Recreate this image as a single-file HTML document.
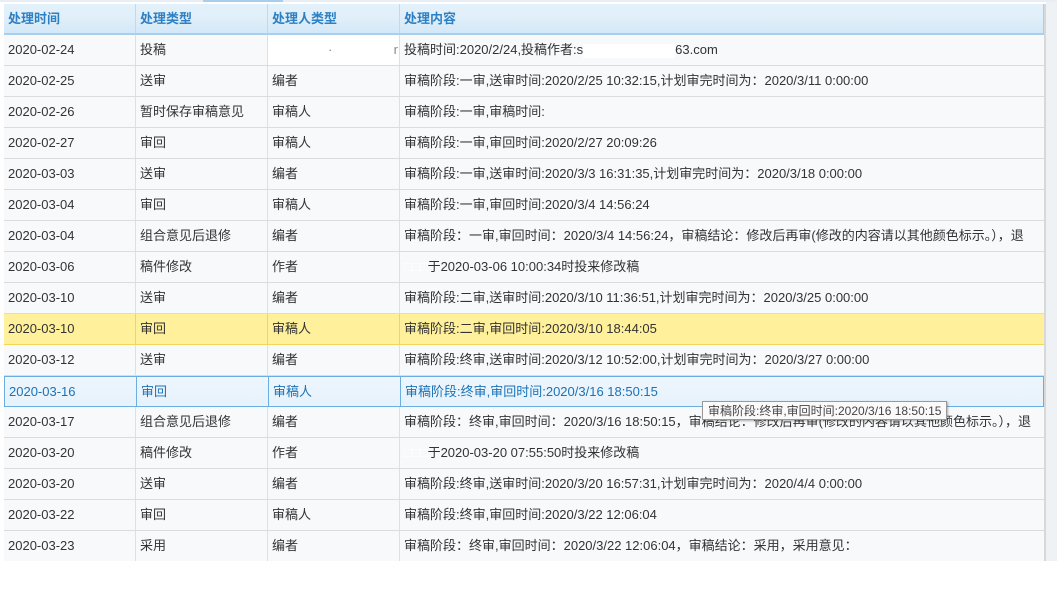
<!DOCTYPE html>
<html><head><meta charset="utf-8"><style>
*{margin:0;padding:0;box-sizing:border-box}
body{width:1057px;height:614px;background:#fff;position:relative;overflow:hidden;font-family:"Liberation Sans","Noto Sans CJK SC",sans-serif;font-size:13px;color:#333}
.topbar{position:absolute;left:0;top:0;width:1057px;height:2px;background:#e8eef3}
.topbar i{position:absolute;left:203px;width:80px;top:0;height:2px;background:#a9cdea}
.side{position:absolute;left:1044px;top:4px;width:2px;height:557px;background:#d8d8d8}
.panel{position:absolute;left:1046px;top:2px;width:11px;height:559px;background:#eef2f5}
.tbl{position:absolute;left:4px;top:4px;width:1040px}
.row{position:absolute;left:0;width:1040px;height:31px;background:#f8f9fb;border-bottom:1px solid #dcdcdc;white-space:nowrap;overflow:hidden}
.row span{position:absolute;top:0;height:30px;line-height:30px;padding-left:4px;border-right:1px solid #e0e0e0;overflow:hidden}
.c1{left:0;width:132px}.c2{left:132px;width:132px}.c3{left:264px;width:132px}.c4{left:396px;width:644px;border-right:none!important}
.hd{top:0;height:31px;background:linear-gradient(#e3f1fb,#e0eff9 50%,#d3e8f8);border-bottom:2px solid #a7d0ef;border-right:1px solid #a7d0ef;font-weight:bold;color:#2e80c4}
.hd span{border-right:1px solid #b9dbf3;height:29px;line-height:29px}
.y{background:#fff09b;border-bottom:1px solid #f2d65a}.y span{border-right:1px solid #f2d65a}
.s{background:linear-gradient(#eef6fd,#e6f2fc);border:1px solid #6aaee3;color:#1b72b6}.s span{border-right:1px solid #6aaee3;height:29px;line-height:29px}
.w{display:inline-block;background:#fff;height:14px;vertical-align:middle}
.tip{position:absolute;left:702px;top:401px;padding:0 5px;height:19px;line-height:18px;background:#fafafa;border:1px solid #999;box-shadow:1px 1px 2px rgba(0,0,0,.3);font-size:12px;color:#444;white-space:nowrap}
</style></head><body>
<div class="topbar"><i></i></div>
<div class="panel"></div>
<div class="side"></div>
<div class="tbl">
<div class="row hd"><span class="c1">处理时间</span><span class="c2">处理类型</span><span class="c3">处理人类型</span><span class="c4">处理内容</span></div>
<div class="row" style="top:31px"><span class="c1">2020-02-24</span><span class="c2">投稿</span><span class="c3" style="background:#fff;color:#888;text-align:right;padding-right:1px">·&nbsp;&nbsp;&nbsp;&nbsp;&nbsp;&nbsp;&nbsp;&nbsp;&nbsp;&nbsp;&nbsp;&nbsp;&nbsp;&nbsp;&nbsp;&nbsp;&nbsp;r</span><span class="c4">投稿时间:2020/2/24,投稿作者:s<span class="w" style="width:92px;position:static;height:14px;padding:0;border:0"></span>63.com</span></div>
<div class="row" style="top:62px"><span class="c1">2020-02-25</span><span class="c2">送审</span><span class="c3">编者</span><span class="c4">审稿阶段:一审,送审时间:2020/2/25 10:32:15,计划审完时间为：2020/3/11 0:00:00</span></div>
<div class="row" style="top:93px"><span class="c1">2020-02-26</span><span class="c2">暂时保存审稿意见</span><span class="c3">审稿人</span><span class="c4">审稿阶段:一审,审稿时间:</span></div>
<div class="row" style="top:124px"><span class="c1">2020-02-27</span><span class="c2">审回</span><span class="c3">审稿人</span><span class="c4">审稿阶段:一审,审回时间:2020/2/27 20:09:26</span></div>
<div class="row" style="top:155px"><span class="c1">2020-03-03</span><span class="c2">送审</span><span class="c3">编者</span><span class="c4">审稿阶段:一审,送审时间:2020/3/3 16:31:35,计划审完时间为：2020/3/18 0:00:00</span></div>
<div class="row" style="top:186px"><span class="c1">2020-03-04</span><span class="c2">审回</span><span class="c3">审稿人</span><span class="c4">审稿阶段:一审,审回时间:2020/3/4 14:56:24</span></div>
<div class="row" style="top:217px"><span class="c1">2020-03-04</span><span class="c2">组合意见后退修</span><span class="c3">编者</span><span class="c4">审稿阶段：一审,审回时间：2020/3/4 14:56:24，审稿结论：修改后再审(修改的内容请以其他颜色标示。），退</span></div>
<div class="row" style="top:248px"><span class="c1">2020-03-06</span><span class="c2">稿件修改</span><span class="c3">作者</span><span class="c4"><span style="position:static;border:0;padding:0;color:#fff">□□□</span>于2020-03-06 10:00:34时投来修改稿</span></div>
<div class="row" style="top:279px"><span class="c1">2020-03-10</span><span class="c2">送审</span><span class="c3">编者</span><span class="c4">审稿阶段:二审,送审时间:2020/3/10 11:36:51,计划审完时间为：2020/3/25 0:00:00</span></div>
<div class="row y" style="top:310px"><span class="c1">2020-03-10</span><span class="c2">审回</span><span class="c3">审稿人</span><span class="c4">审稿阶段:二审,审回时间:2020/3/10 18:44:05</span></div>
<div class="row" style="top:341px"><span class="c1">2020-03-12</span><span class="c2">送审</span><span class="c3">编者</span><span class="c4">审稿阶段:终审,送审时间:2020/3/12 10:52:00,计划审完时间为：2020/3/27 0:00:00</span></div>
<div class="row s" style="top:372px"><span class="c1">2020-03-16</span><span class="c2">审回</span><span class="c3">审稿人</span><span class="c4">审稿阶段:终审,审回时间:2020/3/16 18:50:15</span></div>
<div class="row" style="top:403px"><span class="c1">2020-03-17</span><span class="c2">组合意见后退修</span><span class="c3">编者</span><span class="c4">审稿阶段：终审,审回时间：2020/3/16 18:50:15，审稿结论：修改后再审(修改的内容请以其他颜色标示。），退</span></div>
<div class="row" style="top:434px"><span class="c1">2020-03-20</span><span class="c2">稿件修改</span><span class="c3">作者</span><span class="c4"><span style="position:static;border:0;padding:0;color:#fff">□□□</span>于2020-03-20 07:55:50时投来修改稿</span></div>
<div class="row" style="top:465px"><span class="c1">2020-03-20</span><span class="c2">送审</span><span class="c3">编者</span><span class="c4">审稿阶段:终审,送审时间:2020/3/20 16:57:31,计划审完时间为：2020/4/4 0:00:00</span></div>
<div class="row" style="top:496px"><span class="c1">2020-03-22</span><span class="c2">审回</span><span class="c3">审稿人</span><span class="c4">审稿阶段:终审,审回时间:2020/3/22 12:06:04</span></div>
<div class="row" style="top:527px;border-bottom:none;height:30px"><span class="c1">2020-03-23</span><span class="c2">采用</span><span class="c3">编者</span><span class="c4">审稿阶段：终审,审回时间：2020/3/22 12:06:04，审稿结论：采用，采用意见：</span></div>
</div>
<div class="tip">审稿阶段:终审,审回时间:2020/3/16 18:50:15</div>
</body></html>
